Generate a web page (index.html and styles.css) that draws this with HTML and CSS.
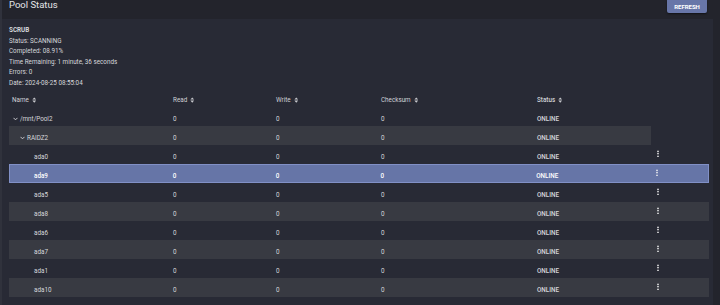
FILE: index.html
```html
<!DOCTYPE html>
<html lang="en">
<head>
    <meta charset="UTF-8">
    <title>Pool Status</title>
    <link rel="stylesheet" href="styles.css">
</head>
<body>
    <div class="topbar">
        <h1 class="title">Pool Status</h1>
        <button class="btn-refresh">REFRESH</button>
    </div>

    <div class="panel">
        <div class="scrub">
            <div class="scrub-title">SCRUB</div>
            <div>Status: SCANNING</div>
            <div>Completed: 08.91%</div>
            <div>Time Remaining: 1 minute, 36 seconds</div>
            <div>Errors: 0</div>
            <div>Date: 2024-08-25 08:55:04</div>
        </div>

        <div class="pool-table">
            <div class="row head">
                <div class="col name">Name <svg class="sort" viewBox="0 0 6 8"><path d="M3 0.5 L5.5 3.3 H0.5 Z M3 7.5 L5.5 4.7 H0.5 Z"/></svg></div>
                <div class="col read">Read <svg class="sort" viewBox="0 0 6 8"><path d="M3 0.5 L5.5 3.3 H0.5 Z M3 7.5 L5.5 4.7 H0.5 Z"/></svg></div>
                <div class="col write">Write <svg class="sort" viewBox="0 0 6 8"><path d="M3 0.5 L5.5 3.3 H0.5 Z M3 7.5 L5.5 4.7 H0.5 Z"/></svg></div>
                <div class="col sum">Checksum <svg class="sort" viewBox="0 0 6 8"><path d="M3 0.5 L5.5 3.3 H0.5 Z M3 7.5 L5.5 4.7 H0.5 Z"/></svg></div>
                <div class="col status">Status <svg class="sort" viewBox="0 0 6 8"><path d="M3 0.5 L5.5 3.3 H0.5 Z M3 7.5 L5.5 4.7 H0.5 Z"/></svg></div>
            </div>

            <div class="row short">
                <div class="col name lvl0"><svg class="chev" viewBox="0 0 6 4"><path d="M0.6 0.6 L3 3 L5.4 0.6"/></svg>/mnt/Pool2</div>
                <div class="col read">0</div>
                <div class="col write">0</div>
                <div class="col sum">0</div>
                <div class="col status">ONLINE</div>
            </div>

            <div class="row short alt">
                <div class="col name lvl1"><svg class="chev" viewBox="0 0 6 4"><path d="M0.6 0.6 L3 3 L5.4 0.6"/></svg>RAIDZ2</div>
                <div class="col read">0</div>
                <div class="col write">0</div>
                <div class="col sum">0</div>
                <div class="col status">ONLINE</div>
            </div>

            <div class="row">
                <div class="col name lvl2">ada0</div>
                <div class="col read">0</div>
                <div class="col write">0</div>
                <div class="col sum">0</div>
                <div class="col status">ONLINE</div>
                <div class="col action"><span class="kebab"></span></div>
            </div>

            <div class="row selected">
                <div class="col name lvl2">ada9</div>
                <div class="col read">0</div>
                <div class="col write">0</div>
                <div class="col sum">0</div>
                <div class="col status">ONLINE</div>
                <div class="col action"><span class="kebab"></span></div>
            </div>

            <div class="row">
                <div class="col name lvl2">ada5</div>
                <div class="col read">0</div>
                <div class="col write">0</div>
                <div class="col sum">0</div>
                <div class="col status">ONLINE</div>
                <div class="col action"><span class="kebab"></span></div>
            </div>

            <div class="row alt">
                <div class="col name lvl2">ada8</div>
                <div class="col read">0</div>
                <div class="col write">0</div>
                <div class="col sum">0</div>
                <div class="col status">ONLINE</div>
                <div class="col action"><span class="kebab"></span></div>
            </div>

            <div class="row">
                <div class="col name lvl2">ada6</div>
                <div class="col read">0</div>
                <div class="col write">0</div>
                <div class="col sum">0</div>
                <div class="col status">ONLINE</div>
                <div class="col action"><span class="kebab"></span></div>
            </div>

            <div class="row alt">
                <div class="col name lvl2">ada7</div>
                <div class="col read">0</div>
                <div class="col write">0</div>
                <div class="col sum">0</div>
                <div class="col status">ONLINE</div>
                <div class="col action"><span class="kebab"></span></div>
            </div>

            <div class="row">
                <div class="col name lvl2">ada1</div>
                <div class="col read">0</div>
                <div class="col write">0</div>
                <div class="col sum">0</div>
                <div class="col status">ONLINE</div>
                <div class="col action"><span class="kebab"></span></div>
            </div>

            <div class="row alt">
                <div class="col name lvl2">ada10</div>
                <div class="col read">0</div>
                <div class="col write">0</div>
                <div class="col sum">0</div>
                <div class="col status">ONLINE</div>
                <div class="col action"><span class="kebab"></span></div>
            </div>
        </div>
    </div>
</body>
</html>
```

FILE: styles.css
```css
body {
    margin: 0;
    background: #23242c;
    font-family: Roboto, "Liberation Sans", sans-serif;
    color: #d6d7db;
    height: 305px;
    overflow: hidden;
    border-left: 2px solid #30323c;
}

.topbar {
    height: 19px;
    display: flex;
    justify-content: space-between;
    align-items: flex-start;
    padding: 0 13px 0 7px;
}

.title {
    margin: -1px 0 0 0;
    font-size: 9.5px;
    font-weight: 400;
    line-height: 11px;
    color: #e4e5e8;
}

.btn-refresh {
    height: 13px;
    width: 40px;
    padding: 0;
    border: none;
    border-radius: 0 0 2px 2px;
    background: #6876a8;
    color: #fff;
    font-family: Roboto, "Liberation Sans", sans-serif;
    font-size: 6px;
    font-weight: 700;
    box-shadow: 0 1px 2px rgba(0,0,0,0.5);
}

.panel {
    background: #282a35;
    margin-right: 7px;
    padding: 6px 4px 8px 7px;
    height: 280px;
}

.scrub {
    font-size: 6.3px;
    line-height: 10.5px;
}

.scrub-title {
    font-weight: 700;
}

.pool-table {
    font-size: 6.3px;
}

.row {
    display: flex;
    align-items: center;
    height: 19px;
    width: 700px;
    box-sizing: border-box;
}

.row.short {
    width: 642px;
}

.row.alt {
    background: #383a42;
}

.row.selected {
    background: #6675a7;
    border: 1px solid #8190c6;
    color: #fff;
    font-weight: 500;
}

.row.head {
    color: #d0d1d6;
}

.col {
    display: flex;
    align-items: center;
    padding-top: 4px;
}

.name { width: 164px; padding-left: 3px; box-sizing: border-box; }
.read { width: 103px; }
.write { width: 105px; }
.sum { width: 156px; }
.status { width: 114px; font-weight: 500; }
.action { width: 58px; padding: 0 0 0 6px; box-sizing: border-box; }

.row.selected .name { margin-left: -1px; }

.lvl0 { padding-left: 4px; }
.lvl1 { padding-left: 11px; }
.lvl2 { padding-left: 25px; }

.sort {
    width: 4.5px;
    height: 6px;
    margin-left: 3px;
    fill: #c8c9ce;
}

.chev {
    width: 5px;
    height: 4px;
    margin-right: 2px;
    fill: none;
    stroke: #d6d7db;
    stroke-width: 1.1;
}

.kebab {
    display: block;
    width: 2px;
    height: 7px;
    margin-top: -3px;
    background: radial-gradient(circle, #f2f2f2 0.8px, transparent 1px) 0 0 / 2px 2.5px repeat-y;
}
```
